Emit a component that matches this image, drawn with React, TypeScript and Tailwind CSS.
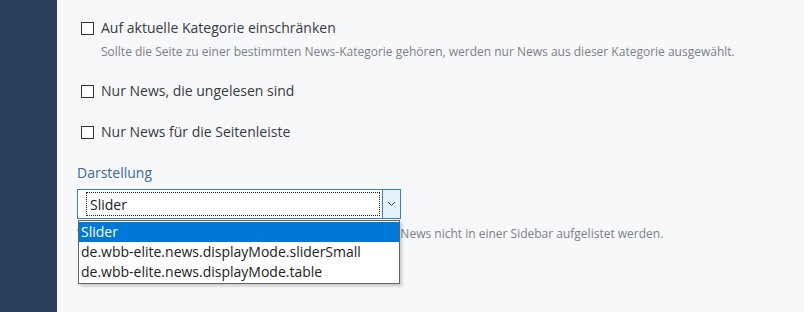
import React from 'react';

const font = { fontFamily: '"Open Sans", "Noto Sans", sans-serif' };

function CheckRow({ label, desc }: { label: string; desc?: string }) {
  return (
    <div className="pl-1">
      <label className="flex items-center gap-[7px] text-[14px] leading-[20px] text-[#383b3e]">
        <span className="w-[13px] h-[13px] border border-[#333] bg-white shrink-0" />
        <span>{label}</span>
      </label>
      {desc && (
        <p className="ml-[20px] mt-[5px] text-[12px] leading-[18px] text-[#7b8085]">{desc}</p>
      )}
    </div>
  );
}

export default function App() {
  return (
    <div className="w-[804px] h-[312px] flex bg-[#f7f8fa] overflow-hidden" style={font}>
      <aside className="w-[57px] shrink-0 bg-[#2a405c]" />
      <main className="flex-1 pl-[20px] pt-[18px]">
        <div className="flex flex-col">
          <CheckRow
            label="Auf aktuelle Kategorie einschränken"
            desc="Sollte die Seite zu einer bestimmten News-Kategorie gehören, werden nur News aus dieser Kategorie ausgewählt."
          />
          <div className="mt-[20px]">
            <CheckRow label="Nur News, die ungelesen sind" />
          </div>
          <div className="mt-[21px]">
            <CheckRow label="Nur News für die Seitenleiste" />
          </div>
          <div className="mt-[21px] text-[14px] leading-[20px] text-[#3d6a96]">Darstellung</div>
          <div className="relative mt-[6px] w-[324px]">
            <div className="h-[30px] flex border border-[#3c7fb1] bg-white">
              <div className="flex-1 p-[2px] pl-[8px]">
                <div className="h-full border border-dotted border-[#222] flex items-center pl-[3px] text-[14px] text-[#222]">
                  Slider
                </div>
              </div>
              <div className="w-[18px] flex items-center justify-center bg-[#e5f1fb] border-l border-[#3c7fb1]">
                <svg width="9" height="6" viewBox="0 0 9 6" fill="none">
                  <path d="M1 1l3.5 3.5L8 1" stroke="#333" strokeWidth="1" />
                </svg>
              </div>
            </div>
            <p className="mt-[6px] text-[12px] leading-[18px] text-[#7b8085] whitespace-nowrap">
              Wählen Sie die Darstellung aus. In der Tabelle können die News nicht in einer Sidebar aufgelistet werden.
            </p>
            <ul className="absolute left-[1px] top-[31px] w-[322px] bg-white border border-[#646464] py-[1px] text-[14px] leading-[20px] text-[#222] shadow-[2px_2px_3px_rgba(0,0,0,0.2)]">
              <li className="px-[2px] bg-[#0078d7] text-white">Slider</li>
              <li className="px-[2px]">de.wbb-elite.news.displayMode.sliderSmall</li>
              <li className="px-[2px]">de.wbb-elite.news.displayMode.table</li>
            </ul>
          </div>
        </div>
      </main>
    </div>
  );
}
